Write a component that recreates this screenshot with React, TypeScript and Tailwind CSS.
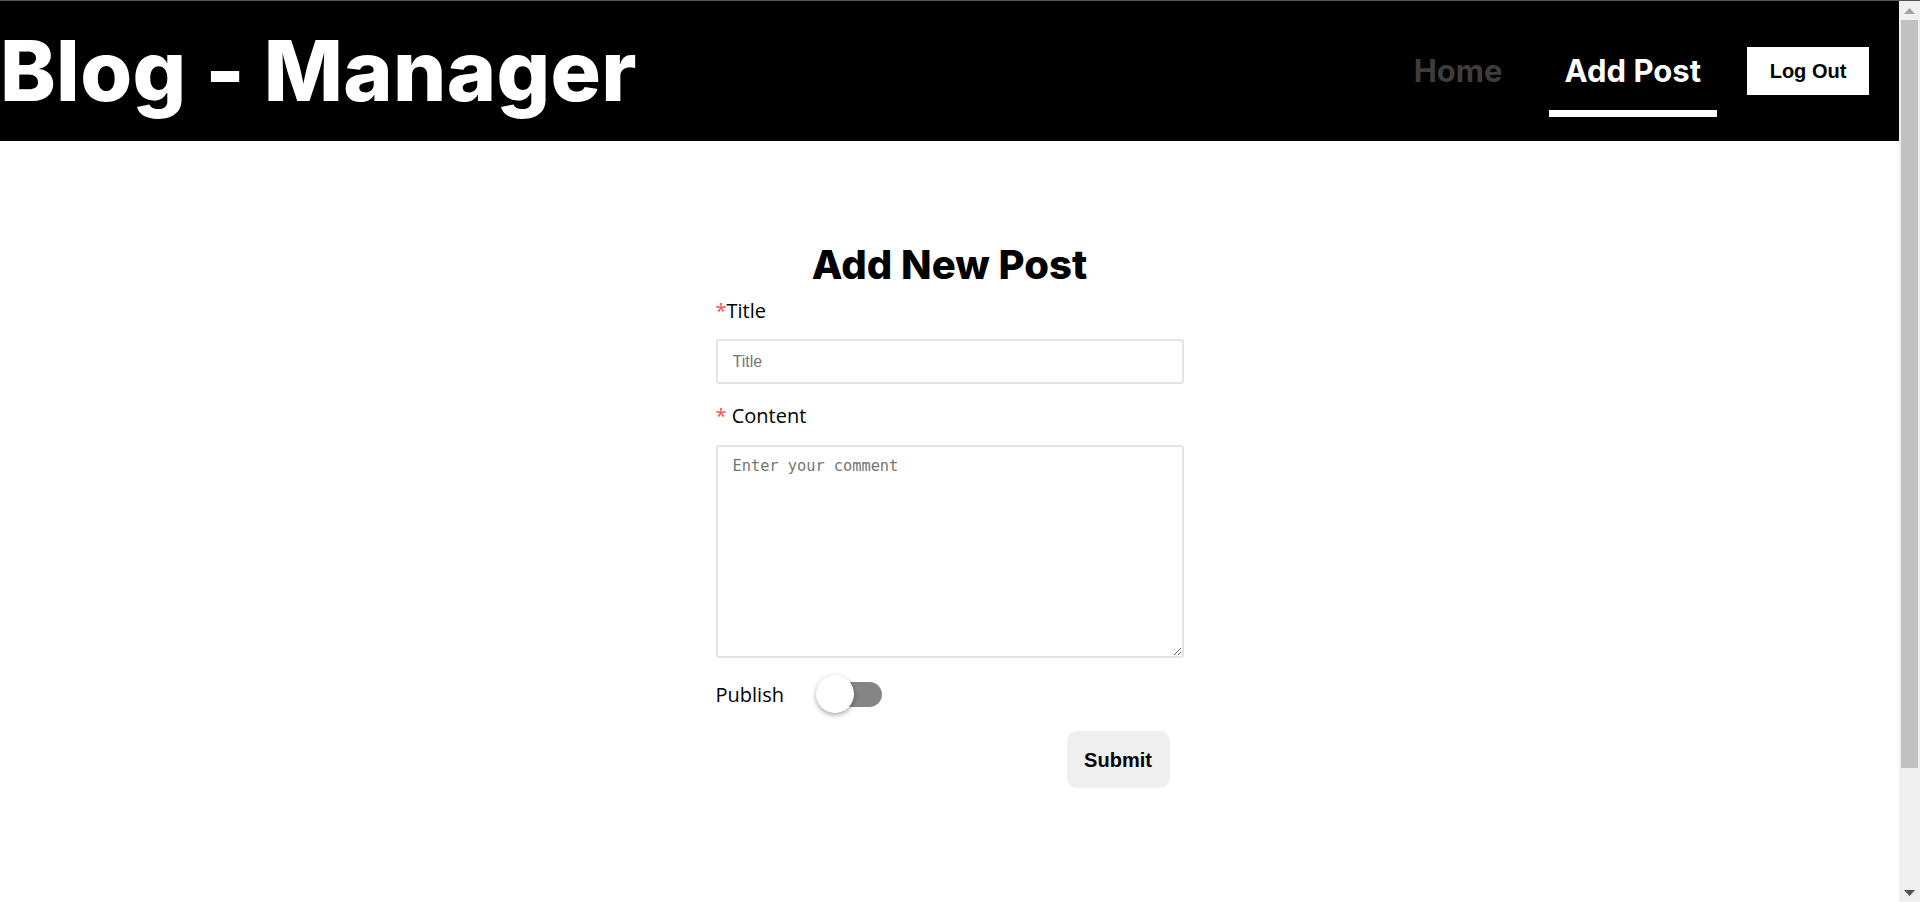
import React from "react";

export default function App() {
  return (
    <div className="h-screen w-full overflow-hidden border-t border-[#555555] bg-white flex">
      <div className="flex-1 min-w-0 flex flex-col">
        <header className="h-[140px] bg-black flex items-center justify-between">
          <div
            className="text-white font-extrabold text-[84px] leading-none tracking-[0.3px]"
            style={{ fontFamily: "Inter, 'Noto Sans', sans-serif" }}
          >
            Blog - Manager
          </div>
          <nav
            className="flex items-center gap-[30px] pr-[30px] h-full"
            style={{ fontFamily: "Inter, 'Noto Sans', sans-serif" }}
          >
            <a className="relative h-full flex items-center px-4 text-[31px] font-bold text-[#3d3d3d]">
              Home
            </a>
            <a className="relative h-full flex items-center px-4 text-[31px] font-bold text-white">
              Add Post
              <span className="absolute left-0 right-0 top-[109px] h-[7px] bg-white" />
            </a>
            <button
              className="w-[122px] h-[48px] bg-white text-black text-[20px] font-bold"
              style={{ fontFamily: "'Liberation Sans', Arial, sans-serif" }}
            >
              Log Out
            </button>
          </nav>
        </header>

        <main className="w-[468px] mx-auto pt-[100px]">
          <h1
            className="text-center text-[40px] leading-[48px] font-extrabold text-black"
            style={{ fontFamily: "Inter, 'Noto Sans', sans-serif" }}
          >
            Add New Post
          </h1>
          <div style={{ fontFamily: "'Open Sans', 'Noto Sans', sans-serif" }}>
            <label className="block mt-[7px] text-[20px] leading-[30px] text-black">
              <span className="text-[#ff4d4f]">*</span>Title
            </label>
            <input
              placeholder="Title"
              className="block mt-[13px] w-full h-[45px] border-2 border-[#e4e4e4] rounded-[3px] px-[15px] text-[16px] placeholder:text-[#757575] outline-none"
              style={{ fontFamily: "'Liberation Sans', Arial, sans-serif" }}
            />
            <label className="block mt-[17px] text-[20px] leading-[30px] text-black">
              <span className="text-[#ff4d4f]">*</span> Content
            </label>
            <textarea
              placeholder="Enter your comment"
              className="block mt-[14px] w-full h-[213px] border-2 border-[#e4e4e4] rounded-[3px] px-[15px] pt-[10px] text-[15.3px] leading-[18px] placeholder:text-[#757575] outline-none"
              style={{ fontFamily: "'DejaVu Sans Mono', 'Liberation Mono', monospace" }}
            />
            <div className="mt-[17px] h-[38px] flex items-center">
              <span className="w-[100px] text-[20px] leading-[30px] text-black pt-[2px]">Publish</span>
              <div className="relative w-[66px] h-[38px]">
                <div className="absolute left-[6px] right-0 top-[7px] h-[25px] rounded-full bg-[#858585]" />
                <div className="absolute left-0 top-0 w-[38px] h-[38px] rounded-full bg-white shadow-[0_2px_5px_rgba(0,0,0,0.35)]" />
              </div>
            </div>
            <div className="mt-[18px] flex justify-end pr-[14px]">
              <button
                className="w-[103px] h-[57px] rounded-[10px] bg-[#efefef] text-black text-[20px] font-bold"
                style={{ fontFamily: "'Liberation Sans', Arial, sans-serif" }}
              >
                Submit
              </button>
            </div>
          </div>
        </main>
      </div>

      <div className="w-[21px] h-full bg-[#f0f0f0] flex flex-col items-center">
        <div className="h-[19px] flex items-center justify-center">
          <svg width="11" height="6" viewBox="0 0 11 6">
            <path d="M0 6 L5.5 0 L11 6 Z" fill="#a3a3a3" />
          </svg>
        </div>
        <div className="w-[17px] h-[748px] bg-[#c1c1c1]" />
        <div className="flex-1" />
        <div className="h-[19px] flex items-center justify-center">
          <svg width="11" height="6" viewBox="0 0 11 6">
            <path d="M0 0 L11 0 L5.5 6 Z" fill="#505050" />
          </svg>
        </div>
      </div>
    </div>
  );
}
